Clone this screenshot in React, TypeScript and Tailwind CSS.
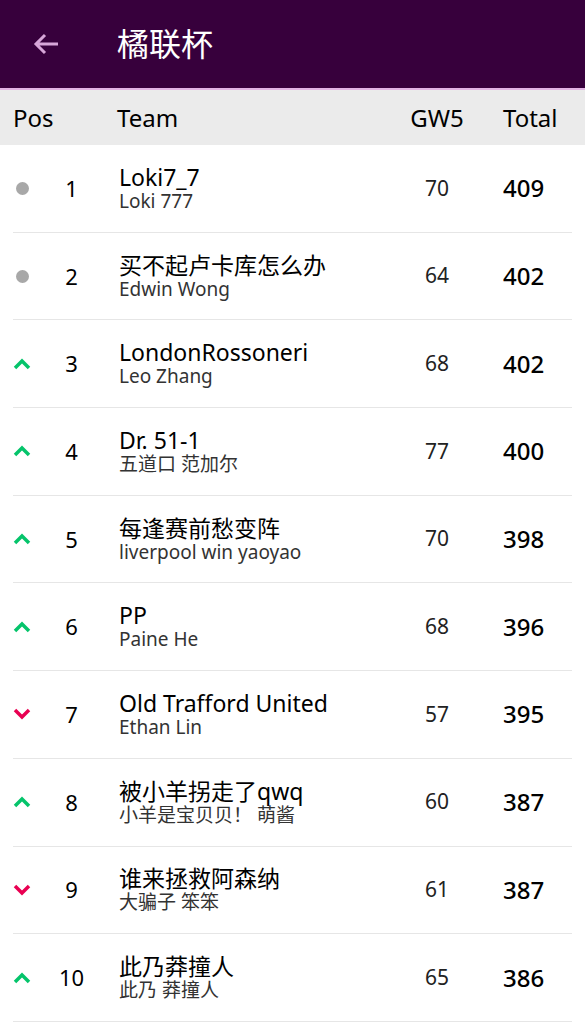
const rows = [
  { move: "same", pos: 1, team: "Loki7_7", manager: "Loki 777", gw: 70, total: 409 },
  { move: "same", pos: 2, team: "买不起卢卡库怎么办", manager: "Edwin Wong", gw: 64, total: 402 },
  { move: "up", pos: 3, team: "LondonRossoneri", manager: "Leo Zhang", gw: 68, total: 402 },
  { move: "up", pos: 4, team: "Dr. 51-1", manager: "五道口 范加尔", gw: 77, total: 400 },
  { move: "up", pos: 5, team: "每逢赛前愁变阵", manager: "liverpool win yaoyao", gw: 70, total: 398 },
  { move: "up", pos: 6, team: "PP", manager: "Paine He", gw: 68, total: 396 },
  { move: "down", pos: 7, team: "Old Trafford United", manager: "Ethan Lin", gw: 57, total: 395 },
  { move: "up", pos: 8, team: "被小羊拐走了qwq", manager: "小羊是宝贝贝！ 萌酱", gw: 60, total: 387 },
  { move: "down", pos: 9, team: "谁来拯救阿森纳", manager: "大骗子 笨笨", gw: 61, total: 387 },
  { move: "up", pos: 10, team: "此乃莽撞人", manager: "此乃 莽撞人", gw: 65, total: 386 },
];

function Move({ kind }: { kind: string }) {
  if (kind === "same") return <span className="block h-[13px] w-[13px] rounded-full bg-[#a8a8a8]" />;
  if (kind === "up")
    return (
      <svg width="18" height="12" viewBox="0 0 18 12">
        <path d="M2 10 L9 3 L16 10" fill="none" stroke="#05c46b" strokeWidth="3.5" />
      </svg>
    );
  return (
    <svg width="18" height="12" viewBox="0 0 18 12">
      <path d="M2 2 L9 9 L16 2" fill="none" stroke="#e90052" strokeWidth="3.5" />
    </svg>
  );
}

export default function App() {
  const font = { fontFamily: '"Noto Sans", "Noto Sans CJK SC", sans-serif' };
  return (
    <div className="min-h-[1024px] w-[585px] bg-white text-black" style={font}>
      <div className="flex h-[88px] items-center bg-[#37003c]">
        <svg className="ml-[32px]" width="28" height="24" viewBox="0 0 28 24">
          <path d="M26 12 H4 M13 3 L4 12 L13 21" fill="none" stroke="#d7a6d9" strokeWidth="3" />
        </svg>
        <span className="ml-[57px] text-[32px] text-white">橘联杯</span>
      </div>
      <div className="h-[2px] bg-[#e2b3e4]" />
      <div className="flex h-[55px] items-center bg-[#ebebeb] text-[24px]">
        <span className="w-[117px] pl-[13px]">Pos</span>
        <span className="flex-1">Team</span>
        <span className="w-[72px] text-center">GW5</span>
        <span className="w-[112px] pl-[30px]">Total</span>
      </div>
      <div className="px-[13px]">
        {rows.map((r) => (
          <div key={r.pos} className="flex h-[87.7px] items-center border-b border-[#e6e6e6]">
            <div className="flex w-[18px] justify-center">
              <Move kind={r.move} />
            </div>
            <div className="w-[81px] text-center text-[22px]">{r.pos}</div>
            <div className="flex min-w-0 flex-1 flex-col pl-[7px]">
              <span className="whitespace-nowrap text-[23px] leading-[26px]">{r.team}</span>
              <span className="whitespace-nowrap text-[19px] leading-[23px] text-[#333]">{r.manager}</span>
            </div>
            <div className="w-[72px] text-center text-[21px] text-[#222]">{r.gw}</div>
            <div className="w-[99px] pl-[30px] text-[24px] font-medium">{r.total}</div>
          </div>
        ))}
      </div>
    </div>
  );
}
